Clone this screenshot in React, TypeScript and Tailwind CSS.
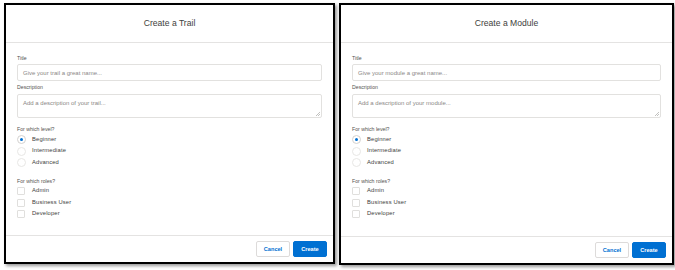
import React from "react";

function Radio({ checked, label }: { checked?: boolean; label: string }) {
  return (
    <div className="flex h-[11.5px] items-center">
      <span
        className={
          "flex h-[9px] w-[9px] items-center justify-center rounded-full border " +
          (checked ? "border-[#d4d2d0]" : "border-[#e8e7e5]")
        }
      >
        {checked && <span className="h-[3px] w-[3px] rounded-full bg-[#0070d2]" />}
      </span>
      <span className="ml-[6px] text-[5.8px] leading-none tracking-[0.15px] text-[#3e3e3c]">{label}</span>
    </div>
  );
}

function Check({ label }: { label: string }) {
  return (
    <div className="flex h-[11.5px] items-center">
      <span className="h-[8px] w-[8px] rounded-[1px] border border-[#e0dfdd]" />
      <span className="ml-[7px] text-[5.8px] leading-none tracking-[0.15px] text-[#3e3e3c]">{label}</span>
    </div>
  );
}

function Panel({ title, noun, w, h }: { title: string; noun: string; w: string; h: string }) {
  return (
    <div
      className={
        "flex shrink-0 flex-col border-2 border-black bg-white shadow-[2px_2px_3px_rgba(0,0,0,0.4)] " + w + " " + h
      }
    >
      <div className="flex h-[38px] shrink-0 items-center justify-center border-b border-[#e4e3e2]">
        <span className="text-[8.6px] text-[#3e3e3c]">{title}</span>
      </div>
      <div className="flex flex-1 flex-col px-[11px] pt-[12px]">
        <div className="h-[7px] text-[5.2px] leading-[7px] text-[#55534f]">Title</div>
        <div className="mt-[2px] flex h-[17px] items-center rounded-[2px] border border-[#e2e1df] px-[5px]">
          <span className="text-[6px] leading-none text-[#8a8886]">Give your {noun} a great name...</span>
        </div>
        <div className="mt-[3px] h-[7px] text-[5.2px] leading-[7px] text-[#55534f]">Description</div>
        <div className="relative mt-[3px] h-[24px] rounded-[2px] border border-[#e2e1df] px-[5px] pt-[5px]">
          <span className="block text-[6px] leading-none text-[#8a8886]">Add a description of your {noun}...</span>
          <svg className="absolute bottom-[1px] right-[1px]" width="5" height="5" viewBox="0 0 5 5">
            <path d="M1 5 L5 1 M3 5 L5 3" stroke="#a8a7a5" strokeWidth="0.7" />
          </svg>
        </div>
        <div className="mt-[8px] h-[7px] text-[5.2px] leading-[7px] text-[#55534f]">For which level?</div>
        <div className="mt-[1px] flex flex-col">
          <Radio checked label="Beginner" />
          <Radio label="Intermediate" />
          <Radio label="Advanced" />
        </div>
        <div className="mt-[9px] h-[7px] text-[5.2px] leading-[7px] text-[#55534f]">For which roles?</div>
        <div className="mt-[1px] flex flex-col">
          <Check label="Admin" />
          <Check label="Business User" />
          <Check label="Developer" />
        </div>
      </div>
      <div className="flex h-[27px] shrink-0 items-center justify-end gap-[3px] border-t border-[#e4e3e2] pr-[6px]">
        <button className="flex h-[16px] w-[34px] items-center justify-center rounded-[2px] border border-[#dddbda] bg-white text-[5.6px] font-bold text-[#0070d2]">
          Cancel
        </button>
        <button className="flex h-[16px] w-[34px] items-center justify-center rounded-[2px] border border-[#0070d2] bg-[#0070d2] text-[5.6px] font-bold text-white">
          Create
        </button>
      </div>
    </div>
  );
}

export default function App() {
  return (
    <div
      className="flex h-[270px] w-[675px] items-start gap-[4px] bg-white pl-[4px] pt-[3px]"
      style={{ fontFamily: '"Liberation Sans", Arial, sans-serif' }}
    >
      <Panel title="Create a Trail" noun="trail" w="w-[331px]" h="h-[261px]" />
      <Panel title="Create a Module" noun="module" w="w-[335px]" h="h-[262px]" />
    </div>
  );
}
